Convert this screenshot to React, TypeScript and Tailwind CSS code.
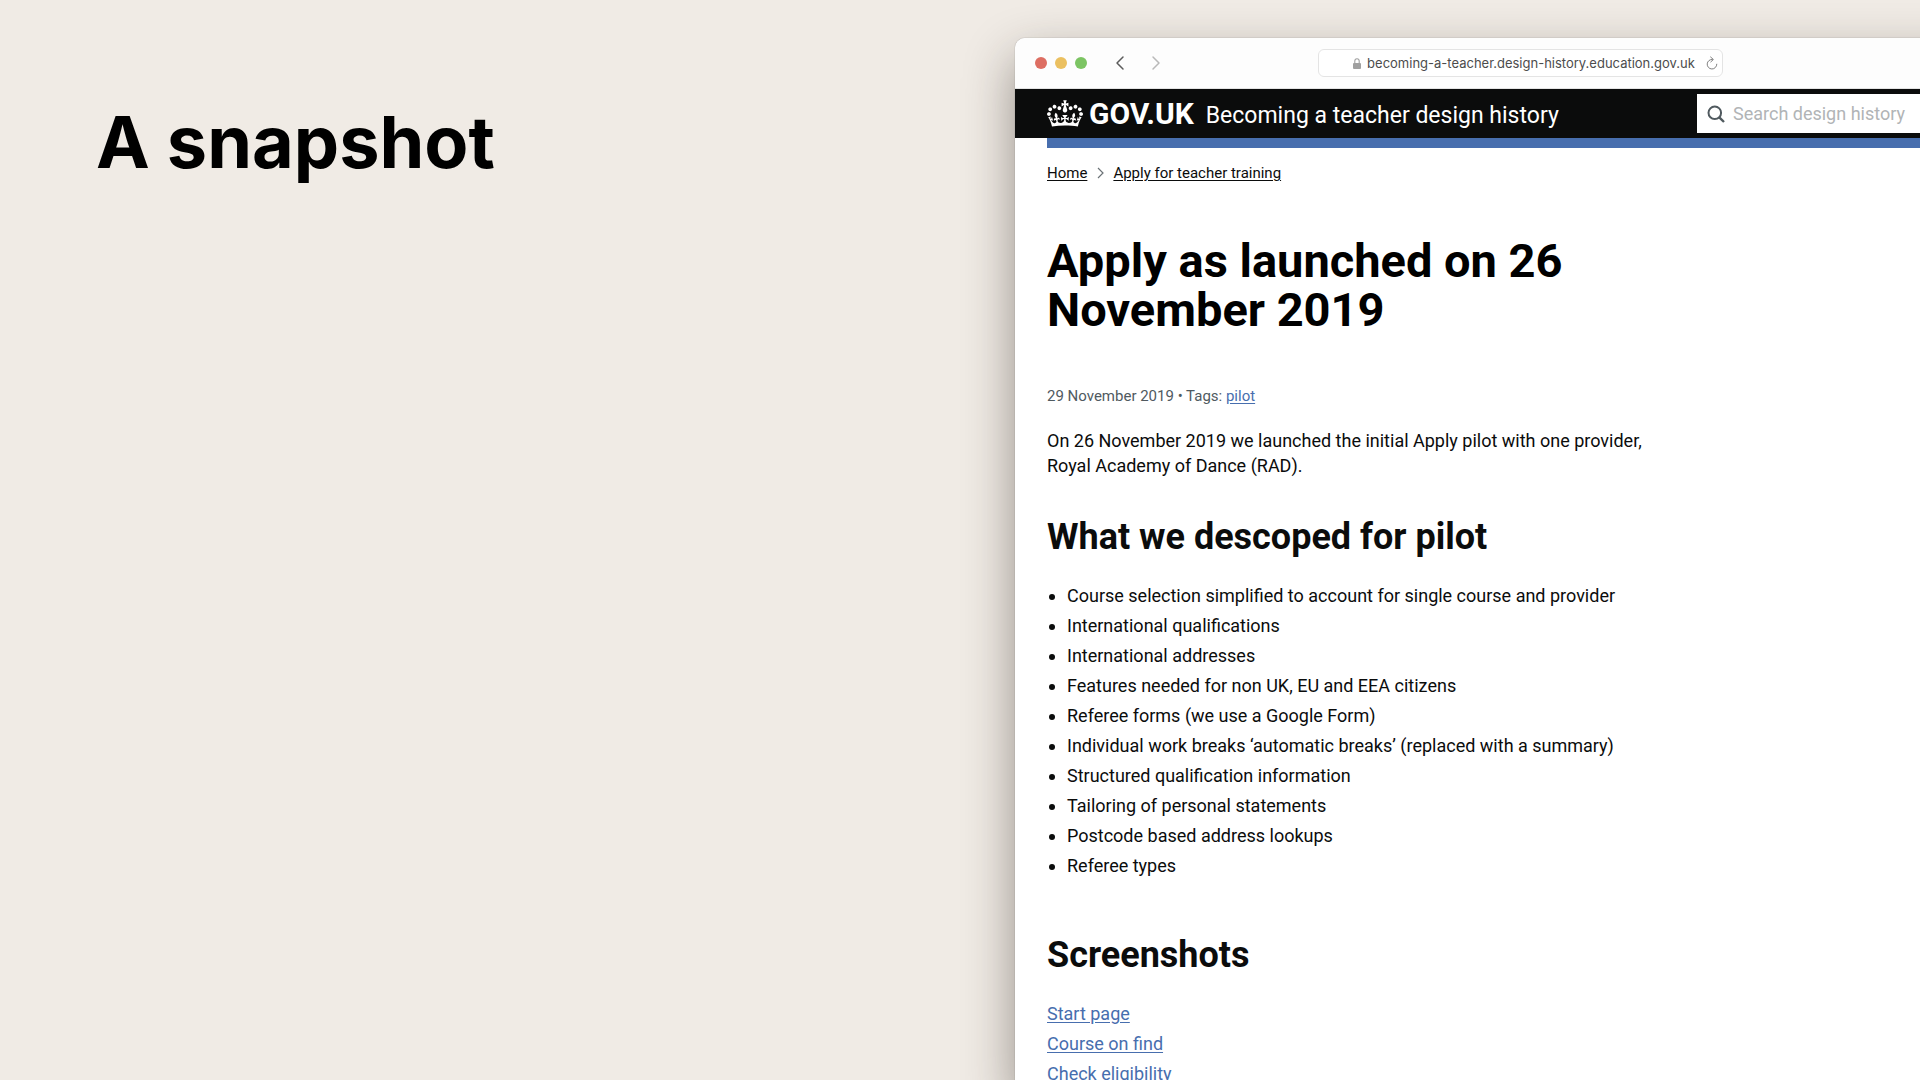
import { ChevronLeft, ChevronRight } from "lucide-react";

const descoped = [
  "Course selection simplified to account for single course and provider",
  "International qualifications",
  "International addresses",
  "Features needed for non UK, EU and EEA citizens",
  "Referee forms (we use a Google Form)",
  "Individual work breaks ‘automatic breaks’ (replaced with a summary)",
  "Structured qualification information",
  "Tailoring of personal statements",
  "Postcode based address lookups",
  "Referee types",
];

const screenshots = ["Start page", "Course on find", "Check eligibility"];

function Crown() {
  return (
    <svg viewBox="0 0 132 97" className="h-[27px] w-9 shrink-0" fill="currentColor" aria-hidden="true">
      <path
        fillRule="evenodd"
        d="M25 30.2c3.5 1.5 7.7-.2 9.1-3.7 1.5-3.6-.2-7.8-3.9-9.2-3.6-1.4-7.6.3-9.1 3.9-1.4 3.5.3 7.5 3.9 9zM9 39.5c3.6 1.5 7.8-.2 9.2-3.7 1.5-3.6-.2-7.8-3.9-9.1-3.6-1.5-7.6.2-9.1 3.8-1.4 3.5.3 7.5 3.8 9zM4.4 57.2c3.5 1.5 7.7-.2 9.1-3.8 1.5-3.6-.2-7.7-3.9-9.1-3.5-1.5-7.6.3-9.1 3.8-1.4 3.5.3 7.6 3.9 9.1zm38.3-21.4c3.5 1.5 7.7-.2 9.1-3.8 1.5-3.6-.2-7.7-3.9-9.1-3.6-1.5-7.6.3-9.1 3.8-1.3 3.6.4 7.7 3.9 9.1zm64.4-5.6c-3.6 1.5-7.8-.2-9.1-3.7-1.5-3.6.2-7.8 3.8-9.2 3.6-1.4 7.7.3 9.2 3.9 1.3 3.5-.4 7.5-3.9 9zm15.9 9.3c-3.6 1.5-7.7-.2-9.1-3.7-1.5-3.6.2-7.8 3.7-9.1 3.6-1.5 7.7.2 9.2 3.8 1.5 3.5-.3 7.5-3.8 9zm4.7 17.7c-3.6 1.5-7.8-.2-9.2-3.8-1.5-3.6.2-7.7 3.9-9.1 3.6-1.5 7.7.3 9.2 3.8 1.3 3.5-.4 7.6-3.9 9.1zM89.3 35.8c-3.6 1.5-7.8-.2-9.2-3.8-1.4-3.6.2-7.7 3.9-9.1 3.6-1.5 7.7.3 9.2 3.8 1.4 3.6-.3 7.7-3.9 9.1zM69.7 17.7l8.9 4.7V9.3l-8.9 2.8c-.2-.3-.5-.6-.9-.9L72.4 0H59.6l3.5 11.2c-.3.3-.6.5-.9.9l-8.8-2.8v13.1l8.8-4.7c.3.3.6.7.9.9l-5 15.4v.1c-.2.8-.4 1.6-.4 2.4 0 4.1 3.1 7.5 7 8.1h.2c.3 0 .7.1 1 .1.4 0 .7 0 1-.1h.2c4-.6 7.1-4.1 7.1-8.1 0-.8-.1-1.7-.4-2.4V34l-5.1-15.4c.4-.2.7-.6 1-.9zM66 92.8c16.9 0 32.8 1.1 47.1 3.2 4-16.9 8.9-26.7 14-33.5l-9.6-3.4c1 4.9 1.1 7.2 0 10.2-1.5-1.4-3-4.3-4.2-8.7L108.6 76c2.8-2 5-3.2 7.5-3.3-4.4 9.4-10 11.9-13.6 11.2-4.3-.8-6.3-4.6-5.6-7.9 1-4.7 5.7-5.9 8-.5 4.3-8.7-3-11.4-7.6-8.8 7.1-7.2 7.9-13.5 2.1-21.1-8 6.1-8.1 12.3-4.5 20.8-4.7-5.4-12.1-2.5-9.5 6.2 3.4-5.2 7.9-2 7.2 3.1-.6 4.3-6.4 7.8-13.5 7.2-10.3-.9-10.9-8-11.2-13.8 2.5-.5 7.1 1.8 11 7.3L80.2 60c-4.1 4.4-8 5.3-12.3 5.4 1.4-4.4 8-11.6 8-11.6H55.5s6.4 7.2 7.9 11.6c-4.2-.1-8-1-12.3-5.4l1.4 16.4c3.9-5.5 8.5-7.7 10.9-7.3-.3 5.8-.9 12.8-11.1 13.8-7.2.6-12.9-2.9-13.5-7.2-.7-5 3.8-8.3 7.1-3.1 2.7-8.7-4.6-11.6-9.4-6.2 3.7-8.5 3.6-14.7-4.6-20.8-5.8 7.6-5 13.9 2.2 21.1-4.7-2.6-11.9.1-7.7 8.8 2.3-5.5 7.1-4.2 8.1.5.7 3.3-1.3 7.1-5.7 7.9-3.5.7-9-1.8-13.5-11.2 2.5.1 4.7 1.3 7.5 3.3l-4.7-15.4c-1.2 4.4-2.7 7.2-4.3 8.7-1.1-3-.9-5.3 0-10.2l-9.5 3.4c5 6.9 9.9 16.7 14 33.5 14.8-2.1 30.8-3.2 47.7-3.2z"
      />
    </svg>
  );
}

function Toolbar() {
  return (
    <div className="grid h-[51px] grid-cols-[1fr_auto_1fr] items-center border-b border-[#e3e3e3] bg-[#fdfdfd] px-5">
      <div className="flex items-center">
        <div className="flex gap-2">
          <button type="button" aria-label="Close" className="size-3 rounded-full bg-[#dd6e62]" />
          <button type="button" aria-label="Minimise" className="size-3 rounded-full bg-[#ebc060]" />
          <button type="button" aria-label="Zoom" className="size-3 rounded-full bg-[#7cc463]" />
        </div>
        <div className="ml-[21px] flex gap-3">
          <button type="button" aria-label="Back" className="text-[#5c5c5c]">
            <ChevronLeft size={24} strokeWidth={1.5} />
          </button>
          <button type="button" aria-label="Forward" className="text-[#b9b9b9]">
            <ChevronRight size={24} strokeWidth={1.5} />
          </button>
        </div>
      </div>
      <div className="flex h-7 w-[405px] items-center rounded-md border border-[#e4e4e4] bg-white pr-1">
        <div className="flex grow items-center justify-center gap-1.5 pl-6">
          <svg viewBox="0 0 8 11" className="h-[11px] w-2" aria-hidden="true">
            <rect x="0" y="5" width="8" height="6" rx="1" fill="#a0a0a0" />
            <path d="M1.8 5.2V3.1a2.2 2.4 0 0 1 4.4 0v2.1" fill="none" stroke="#a0a0a0" strokeWidth="1.1" />
          </svg>
          <span className="font-[Inter,sans-serif] text-[13px] leading-5 text-[#4c4c4c]">
            becoming-a-teacher.design-history.education.gov.uk
          </span>
        </div>
        <button type="button" aria-label="Reload" className="text-[#808080]">
          <svg viewBox="0 0 12 14" className="h-3.5 w-3" fill="none" stroke="currentColor" strokeWidth="1" aria-hidden="true">
            <path d="M6.4 3.4A4.8 4.8 0 1 0 10.8 8.2" strokeLinecap="round" />
            <path d="M4.6 1l2.8 2.5-2.6 2.4" strokeLinecap="round" strokeLinejoin="round" />
          </svg>
        </button>
      </div>
    </div>
  );
}

function SiteHeader() {
  return (
    <header className="bg-[#0b0c0c]">
      <div className="flex h-[49px] items-center justify-between px-8 text-white">
        <div className="flex items-center">
          <a href="#gov" className="flex items-center gap-1.5 text-[30px] leading-9 font-bold">
            <Crown />
            GOV.UK
          </a>
          <a href="#home" className="ml-3 pt-1 text-[23px] leading-9">
            Becoming a teacher design history
          </a>
        </div>
        <label className="flex h-[39px] w-[296px] items-center gap-2 bg-white px-2.5">
          <svg viewBox="0 0 18 18" className="size-[18px]" fill="none" stroke="#505a5f" strokeWidth="2" aria-hidden="true">
            <circle cx="7.8" cy="7.8" r="6.3" />
            <path d="M12.3 12.3L17 17" strokeWidth="2.4" />
          </svg>
          <span className="sr-only">Search</span>
          <input
            type="search"
            placeholder="Search design history"
            className="min-w-0 grow bg-transparent text-lg leading-6 text-[#0b0c0c] outline-none placeholder:text-[#b1b4b6]"
          />
        </label>
      </div>
    </header>
  );
}

export default function App() {
  return (
    <div className="grid h-screen grid-cols-[1015fr_905fr] overflow-hidden bg-[#f0ebe5] font-[Roboto,sans-serif]">
      <section className="px-24 pt-[98px]">
        <h1 className="font-[Inter,sans-serif] text-[72px] leading-[88px] font-bold text-black">A snapshot</h1>
      </section>

      <div className="min-w-0 pt-[38px]">
        <div className="h-full w-[calc(100%+105px)] rounded-tl-[10px] bg-white text-[#0b0c0c] shadow-[0_20px_50px_rgba(40,30,25,0.45),0_0_1px_rgba(0,0,0,0.5)]">
          <div className="overflow-hidden rounded-tl-[10px]">
            <Toolbar />
            <SiteHeader />
          </div>
          <main className="ml-8">
            <div className="h-2.5 bg-[#476eae]" />
            <nav aria-label="Breadcrumb" className="mt-[15px] flex items-center gap-2 text-[15px] leading-5">
              <a href="#home" className="underline underline-offset-2">
                Home
              </a>
              <svg viewBox="0 0 10 12" className="h-3 w-2.5" fill="none" stroke="#6b7276" strokeWidth="1.2" aria-hidden="true">
                <path d="M3 1l5 5-5 5" />
              </svg>
              <a href="#apply" className="underline underline-offset-2">
                Apply for teacher training
              </a>
            </nav>

            <article className="max-w-[640px]">
              <h2 className="mt-[53px] max-w-[560px] text-[47px] leading-[49px] font-bold text-black">
                Apply as launched on 26 November 2019
              </h2>
              <p className="mt-[52px] text-[15px] leading-5 text-[#505a5f]">
                29 November 2019 • Tags:{" "}
                <a href="#pilot" className="text-[#476eae] underline underline-offset-2">
                  pilot
                </a>
              </p>
              <p className="mt-[22px] max-w-[610px] text-lg leading-[25px]">
                On 26 November 2019 we launched the initial Apply pilot with one provider, Royal Academy of Dance (RAD).
              </p>
              <h3 className="mt-[39px] text-4xl leading-10 font-bold">What we descoped for pilot</h3>
              <ul className="mt-6 list-disc pl-5 text-lg leading-[30px]">
                {descoped.map((item) => (
                  <li key={item}>{item}</li>
                ))}
              </ul>
              <h3 className="mt-[54px] text-4xl leading-10 font-bold">Screenshots</h3>
              <ul className="mt-6 text-lg leading-[30px]">
                {screenshots.map((item) => (
                  <li key={item}>
                    <a href="#screenshot" className="text-[#476eae] underline underline-offset-2">
                      {item}
                    </a>
                  </li>
                ))}
              </ul>
            </article>
          </main>
        </div>
      </div>
    </div>
  );
}
